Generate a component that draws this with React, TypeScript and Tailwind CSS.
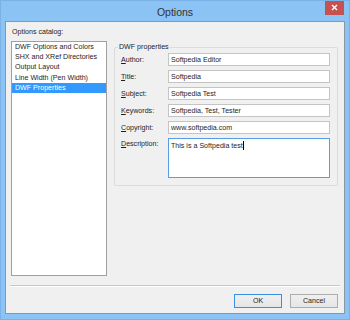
import React from "react";

function U({ c, rest }: { c: string; rest: string }) {
  return (
    <span>
      <span className="underline underline-offset-[1px] decoration-[0.5px]">{c}</span>
      {rest}
    </span>
  );
}

function Field({ label, value }: { label: React.ReactNode; value: string }) {
  return (
    <div className="flex items-center h-[13px]">
      <div className="w-[47px] shrink-0">{label}</div>
      <div className="w-[162px] h-[13px] bg-white border border-[#c4c4c4] pl-[2px] flex items-center">
        {value}
      </div>
    </div>
  );
}

export default function App() {
  const items = [
    "DWF Options and Colors",
    "SHX and XRef Directories",
    "Output Layout",
    "Line Width (Pen Width)",
    "DWF Properties",
  ];
  return (
    <div className="w-[350px] h-[320px] bg-[#8cc3f5] border border-[#7ab2e8] flex flex-col font-['Liberation_Sans',Arial,sans-serif] text-[7.1px] leading-[10px] text-[#1e1e1e] overflow-hidden">
      <div className="relative h-[20px] shrink-0 flex items-center justify-center">
        <span className="text-[10.5px] leading-[12px] text-[#333333] pt-[1px]">Options</span>
        <div className="absolute right-[5px] top-[-1px] w-[19px] h-[15px] bg-[#c75050] flex items-center justify-center">
          <svg width="7" height="7" viewBox="0 0 7 7">
            <path d="M1 1 L6 6 M6 1 L1 6" stroke="white" strokeWidth="1.4" />
          </svg>
        </div>
      </div>
      <div className="ml-[4px] w-[340px] h-[293px] shrink-0 border border-[#8a98a6] bg-[#f0f0f0] flex flex-col">
        <div className="pt-[5px] pl-[6px] h-[15px]">Options catalog:</div>
        <div className="mt-[4px] pl-[5px] flex items-start">
          <div className="w-[96px] h-[235px] bg-white border border-[#a0a0a0] flex flex-col">
            {items.map((t, i) => (
              <div
                key={t}
                className={
                  i === 4
                    ? "h-[10.2px] pl-[3px] flex items-center bg-[#3399ff] text-white"
                    : "h-[10.2px] pl-[3px] flex items-center"
                }
              >
                {t}
              </div>
            ))}
          </div>
          <div className="relative ml-[7px] mt-[6px] w-[224px] border border-[#dcdcdc] rounded-[2px] pt-[5px] pl-[6px] pb-[7px] flex flex-col gap-[4px]">
            <div className="absolute left-[3px] top-[-6px] px-[1px] bg-[#f0f0f0]">DWF properties</div>
            <Field label={<U c="A" rest="uthor:" />} value="Softpedia Editor" />
            <Field label={<U c="T" rest="itle:" />} value="Softpedia" />
            <Field label={<U c="S" rest="ubject:" />} value="Softpedia Test" />
            <Field label={<U c="K" rest="eywords:" />} value="Softpedia, Test, Tester" />
            <Field label={<U c="C" rest="opyright:" />} value="www.softpedia.com" />
            <div className="flex items-start">
              <div className="w-[47px] shrink-0 pt-[1px]">
                <U c="D" rest="escription:" />
              </div>
              <div className="w-[162px] h-[40px] bg-white border border-[#569de5] pl-[2px] pt-[2px] flex items-start">
                <span>This is a Softpedia test</span>
                <span className="w-[1px] h-[9px] bg-black" />
              </div>
            </div>
          </div>
        </div>
        <div className="mt-[9px] mx-[4px] border-t border-t-[#c8c8c8] border-b border-b-white" />
        <div className="mt-[7px] pr-[6px] flex justify-end gap-[8px]">
          <div className="w-[48px] h-[14px] border border-[#3c8fe0] bg-gradient-to-b from-[#f0f0f0] to-[#e5e5e5] flex items-center justify-center">
            OK
          </div>
          <div className="w-[48px] h-[14px] border border-[#acacac] bg-gradient-to-b from-[#f0f0f0] to-[#e5e5e5] flex items-center justify-center">
            Cancel
          </div>
        </div>
      </div>
    </div>
  );
}
